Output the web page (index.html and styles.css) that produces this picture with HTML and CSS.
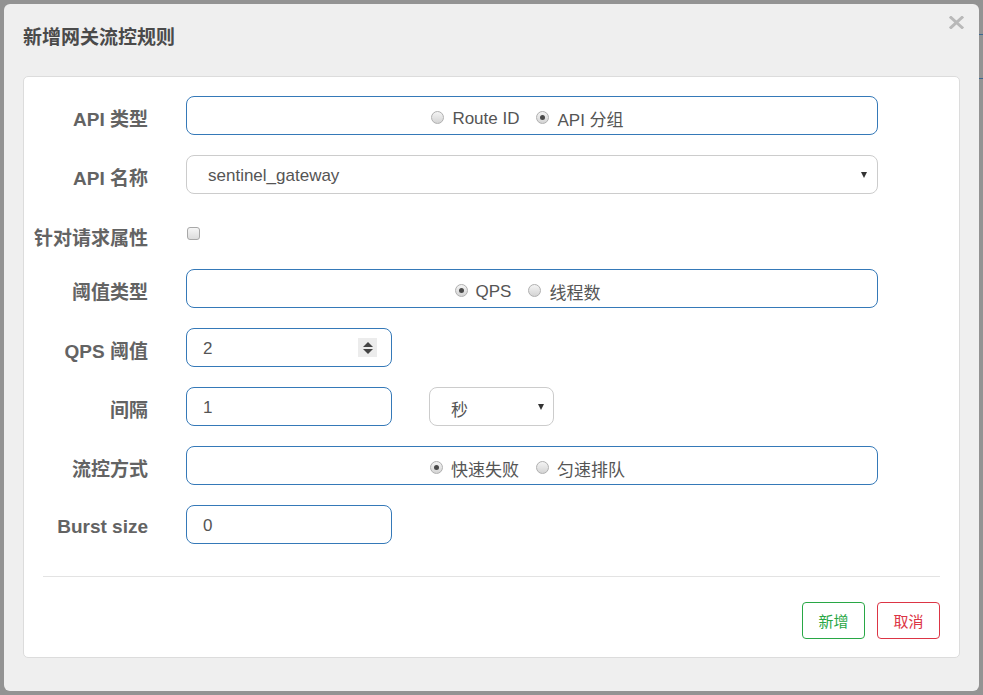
FILE: index.html
```html
<!DOCTYPE html>
<html lang="zh-CN">
<head>
<meta charset="utf-8">
<title>新增网关流控规则</title>
<link rel="stylesheet" href="styles.css">
</head>
<body>
<div class="modal">
  <div class="modal-header">
    <h3 class="modal-title">新增网关流控规则</h3>
    <span class="close" aria-label="关闭">
      <svg width="15" height="13" viewBox="0 0 15 13"><path d="M2 1.5 L13 11.5 M13 1.5 L2 11.5" stroke="#b9b9b9" stroke-width="3" stroke-linecap="square" fill="none"/></svg>
    </span>
  </div>
  <div class="card">
    <div class="form-row">
      <label class="label">API 类型</label>
      <div class="control wide radio-group">
        <span class="radio-item"><span class="radio"></span>Route ID</span>
        <span class="radio-item"><span class="radio checked"></span>API 分组</span>
      </div>
    </div>
    <div class="form-row">
      <label class="label">API 名称</label>
      <div class="control wide select"><span class="value sel-value">sentinel_gateway</span><span class="caret"></span></div>
    </div>
    <div class="form-row check-row">
      <label class="label">针对请求属性</label>
      <span class="checkbox"></span>
    </div>
    <div class="form-row">
      <label class="label">阈值类型</label>
      <div class="control wide radio-group">
        <span class="radio-item"><span class="radio checked"></span>QPS</span>
        <span class="radio-item"><span class="radio"></span>线程数</span>
      </div>
    </div>
    <div class="form-row">
      <label class="label">QPS 阈值</label>
      <div class="control small number"><span class="value">2</span>
        <span class="spinner"><span class="up"></span><span class="down"></span></span>
      </div>
    </div>
    <div class="form-row">
      <label class="label">间隔</label>
      <div class="control small"><span class="value">1</span></div>
      <div class="control select unit"><span class="value sel-value">秒</span><span class="caret"></span></div>
    </div>
    <div class="form-row">
      <label class="label">流控方式</label>
      <div class="control wide radio-group">
        <span class="radio-item"><span class="radio checked"></span>快速失败</span>
        <span class="radio-item"><span class="radio"></span>匀速排队</span>
      </div>
    </div>
    <div class="form-row">
      <label class="label">Burst size</label>
      <div class="control small"><span class="value">0</span></div>
    </div>
    <hr class="divider">
    <div class="footer">
      <button class="btn btn-add">新增</button>
      <button class="btn btn-cancel">取消</button>
    </div>
  </div>
</div>
</body>
</html>
```

FILE: styles.css
```css
html, body {
  margin: 0;
  padding: 0;
}
body {
  width: 983px;
  height: 695px;
  overflow: hidden;
  background-color: #939393;
  background-image:
    linear-gradient(#3d6790, #3d6790),
    linear-gradient(#3d6790, #3d6790);
  background-repeat: no-repeat;
  background-size: 4px 1px, 4px 1px;
  background-position: right 0 top 34px, right 0 top 78px;
  font-family: "Liberation Sans", "Noto Sans CJK SC", sans-serif;
  padding-top: 4px;
  box-sizing: border-box;
}
.modal {
  margin-left: 4px;
  width: 975px;
  height: 687px;
  box-sizing: border-box;
  background: #efefef;
  border-radius: 6px;
  display: flex;
  flex-direction: column;
}
.modal-header {
  height: 72px;
  box-sizing: border-box;
  padding: 23px 15px 0 19px;
  display: flex;
  align-items: flex-start;
}
.modal-title {
  margin: 0;
  font-size: 19px;
  line-height: 21px;
  font-weight: bold;
  color: #4a4a4a;
}
.close {
  margin-left: auto;
  margin-top: -11px;
  display: block;
  width: 15px;
  height: 13px;
}
.close svg { display: block; }
.card {
  margin: 0 19px;
  height: 582px;
  box-sizing: border-box;
  background: #fff;
  border: 1px solid #dcdcdc;
  border-radius: 5px;
  padding-top: 19px;
}
.form-row {
  display: flex;
  align-items: center;
  margin-bottom: 20px;
}
.label {
  width: 124px;
  margin-right: 38px;
  padding-top: 4px;
  text-align: right;
  font-size: 19px;
  font-weight: bold;
  color: #636363;
  white-space: nowrap;
}
.control {
  height: 39px;
  box-sizing: border-box;
  border: 1px solid #3579b8;
  border-radius: 8px;
  display: flex;
  align-items: center;
  padding-top: 2px;
  font-size: 17px;
  color: #555;
  background: #fff;
}
.control .value {
  padding-left: 16px;
}
.wide { width: 692px; }
.small { width: 206px; }
.select {
  border-color: #cccccc;
  justify-content: space-between;
  padding-right: 10px;
}
.select .sel-value { padding-left: 21px; }
.unit {
  width: 125px;
  margin-left: 37px;
  padding-right: 9px;
  padding-top: 4px;
}
.caret {
  width: 0;
  height: 0;
  border-left: 3.5px solid transparent;
  border-right: 3.5px solid transparent;
  border-top: 6px solid #333;
  margin-top: -1px;
}
.unit .caret { margin-top: -4px; }
.radio-group {
  justify-content: center;
  padding-right: 9px;
  gap: 17px;
  padding-top: 6px;
}
.radio-item {
  display: flex;
  align-items: center;
  white-space: nowrap;
}
.radio {
  width: 13px;
  height: 13px;
  box-sizing: border-box;
  border-radius: 50%;
  border: 1px solid #b0b0b0;
  background: linear-gradient(#f4f4f4, #d4d4d4);
  margin-right: 8px;
  margin-top: -3px;
  display: flex;
  align-items: center;
  justify-content: center;
}
.radio.checked::after {
  content: "";
  width: 5px;
  height: 5px;
  border-radius: 50%;
  background: #4a4a4a;
}
.check-row {
  height: 35px;
  padding-top: 6px;
  box-sizing: border-box;
}
.check-row .label { padding-top: 3px; }
.checkbox {
  display: block;
  width: 13px;
  height: 13px;
  box-sizing: border-box;
  border: 1px solid #a8a8a8;
  border-radius: 3px;
  background: linear-gradient(#f6f6f6, #dcdcdc);
  margin-left: 1px;
  margin-top: -2px;
}
.number {
  justify-content: space-between;
  padding-right: 14px;
}
.spinner {
  width: 19px;
  height: 19px;
  margin-top: -2px;
  background: #ececec;
  display: flex;
  flex-direction: column;
  align-items: center;
  justify-content: center;
  gap: 2px;
}
.spinner .up {
  width: 0; height: 0;
  border-left: 5px solid transparent;
  border-right: 5px solid transparent;
  border-bottom: 5px solid #444;
}
.spinner .down {
  width: 0; height: 0;
  border-left: 5px solid transparent;
  border-right: 5px solid transparent;
  border-top: 5px solid #444;
}
.divider {
  border: 0;
  border-top: 1px solid #e3e3e3;
  margin: 32px 19px 0 19px;
  height: 0;
}
.footer {
  display: flex;
  justify-content: flex-end;
  gap: 12px;
  padding-right: 19px;
  margin-top: 25px;
}
.btn {
  width: 63px;
  height: 37px;
  box-sizing: border-box;
  background: #fff;
  border-radius: 4px;
  font-family: "Noto Sans CJK SC", sans-serif;
  font-size: 15px;
  padding: 0;
}
.btn-add {
  border: 1px solid #28a745;
  color: #28a745;
}
.btn-cancel {
  border: 1px solid #dc3545;
  color: #dc3545;
}
```
